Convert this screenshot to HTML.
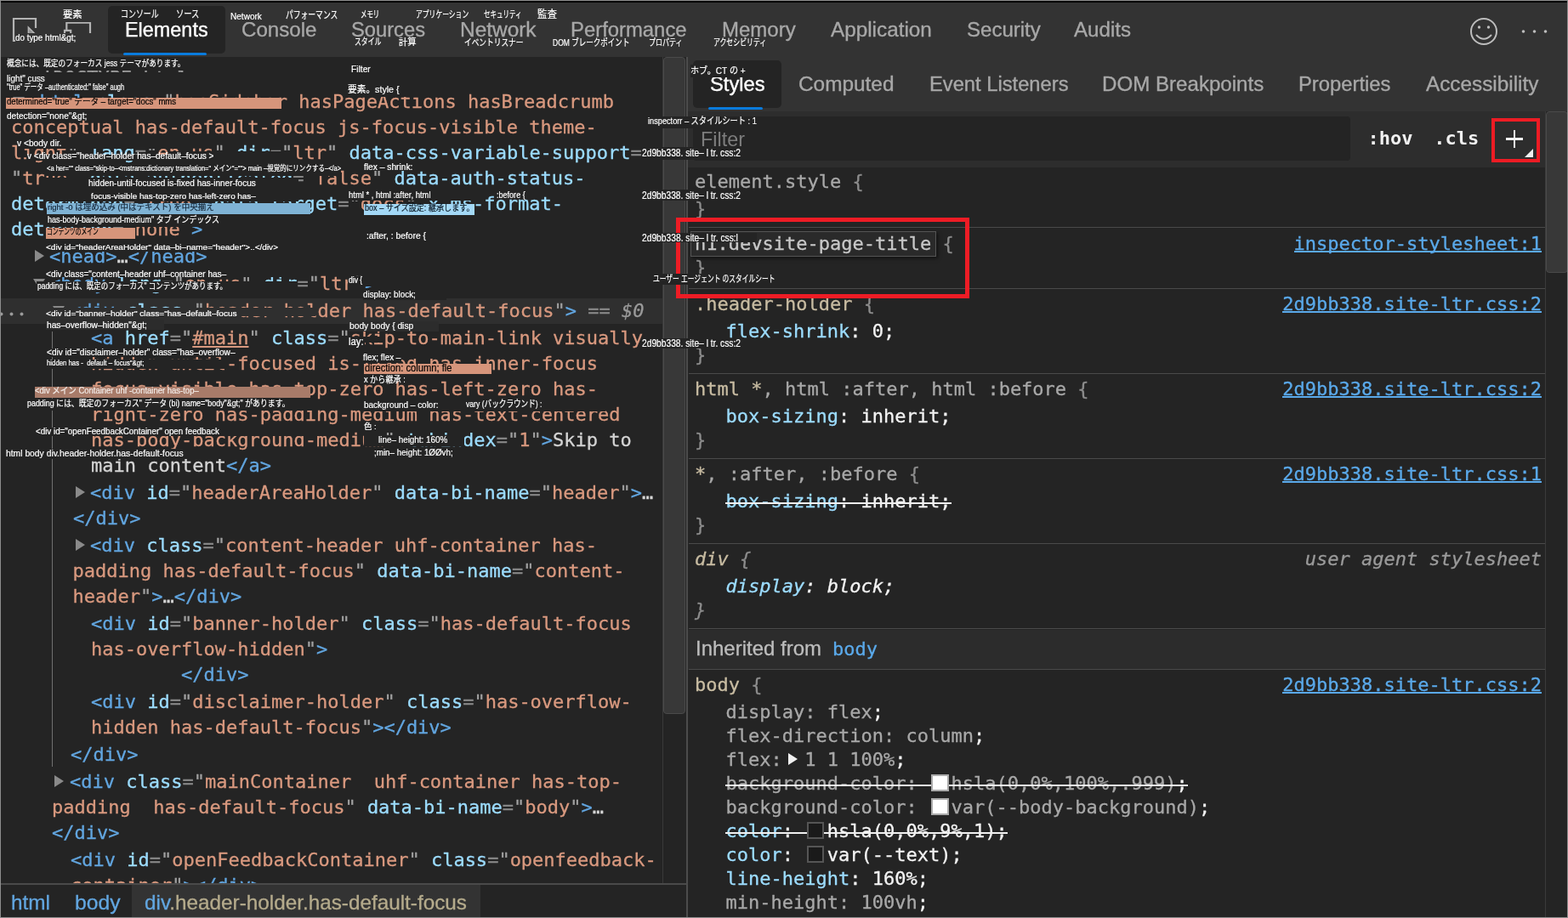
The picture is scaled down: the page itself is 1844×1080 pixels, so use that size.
<!DOCTYPE html><html lang="ja"><head><meta charset="utf-8"><title>DevTools</title><style>
html,body{margin:0;padding:0;width:1844px;height:1080px;overflow:hidden;background:#242424;}
.abs{position:absolute;}
.dl{position:absolute;font:22px 'DejaVu Sans Mono','Liberation Mono',monospace;line-height:30px;white-space:pre;color:#d4d4d4;-webkit-text-stroke:0.3px;}
.sl{position:absolute;font:22px 'DejaVu Sans Mono','Liberation Mono',monospace;line-height:28px;white-space:pre;color:#d4d4d4;-webkit-text-stroke:0.3px;}
.tb{-webkit-text-stroke:0.35px;}
</style></head><body>
<div id="root" class="abs" style="left:0;top:0;width:1844px;height:1080px;overflow:hidden;background:#242424;will-change:transform">
<div class="abs" style="left:0px;top:350.5px;width:780px;height:30.5px;background:#2f2f2f;"></div>
<svg class="abs" style="left:0;top:365px" width="32" height="10" viewBox="0 0 32 10"><circle cx="1.5" cy="4.5" r="2" fill="#9a9a9a"/><circle cx="13.5" cy="4.5" r="2" fill="#9a9a9a"/><circle cx="25.5" cy="4.5" r="2" fill="#9a9a9a"/></svg>
<div class="abs" style="left:61px;top:390px;width:1.3px;height:512px;background:#707070;"></div>
<div class="dl" style="left:36px;top:77px;"><span style="color:#9a9a9a;">&lt;!DOCTYPE html&gt;</span></div>
<svg class="abs" style="left:15px;top:113.5px" width="14" height="11" viewBox="0 0 14 11"><polygon points="0,0 14,0 7.0,11" fill="#8a8a8a"/></svg>
<div class="dl" style="left:33.3px;top:105px;"><span style="color:#62a6e0;">&lt;html</span> <span style="color:#9cdcfe;">class</span><span style="color:#8a8a8a;">=</span><span style="color:#a0a0a0;">&quot;</span><span style="color:#d9997f;">hasSidebar hasPageActions hasBreadcrumb</span></div>
<div class="dl" style="left:13px;top:135px;"><span style="color:#d9997f;">conceptual has-default-focus js-focus-visible theme-</span></div>
<div class="dl" style="left:13px;top:165px;"><span style="color:#d9997f;">light</span><span style="color:#a0a0a0;">&quot;</span> <span style="color:#9cdcfe;">lang</span><span style="color:#8a8a8a;">=</span><span style="color:#a0a0a0;">&quot;</span><span style="color:#d9997f;">en-us</span><span style="color:#a0a0a0;">&quot;</span> <span style="color:#9cdcfe;">dir</span><span style="color:#8a8a8a;">=</span><span style="color:#a0a0a0;">&quot;</span><span style="color:#d9997f;">ltr</span><span style="color:#a0a0a0;">&quot;</span> <span style="color:#9cdcfe;">data-css-variable-support</span><span style="color:#8a8a8a;">=</span></div>
<div class="dl" style="left:13px;top:195px;"><span style="color:#a0a0a0;">&quot;</span><span style="color:#d9997f;">true</span><span style="color:#a0a0a0;">&quot;</span> <span style="color:#9cdcfe;">data-authenticated</span><span style="color:#8a8a8a;">=</span><span style="color:#a0a0a0;">&quot;</span><span style="color:#d9997f;">false</span><span style="color:#a0a0a0;">&quot;</span> <span style="color:#9cdcfe;">data-auth-status-</span></div>
<div class="dl" style="left:13px;top:225px;"><span style="color:#9cdcfe;">determined</span><span style="color:#8a8a8a;">=</span><span style="color:#a0a0a0;">&quot;</span><span style="color:#d9997f;">true</span><span style="color:#a0a0a0;">&quot;</span> <span style="color:#9cdcfe;">data-target</span><span style="color:#8a8a8a;">=</span><span style="color:#a0a0a0;">&quot;</span><span style="color:#d9997f;">docs</span><span style="color:#a0a0a0;">&quot;</span> <span style="color:#9cdcfe;">x-ms-format-</span></div>
<div class="dl" style="left:13px;top:255px;"><span style="color:#9cdcfe;">detection</span><span style="color:#8a8a8a;">=</span><span style="color:#a0a0a0;">&quot;</span><span style="color:#d9997f;">none</span><span style="color:#a0a0a0;">&quot;</span><span style="color:#62a6e0;">&gt;</span></div>
<svg class="abs" style="left:41px;top:294.0px" width="11" height="14" viewBox="0 0 11 14"><polygon points="0,0 11,7.0 0,14" fill="#8a8a8a"/></svg>
<div class="dl" style="left:58px;top:287px;"><span style="color:#62a6e0;">&lt;head&gt;</span><span style="color:#d4d4d4;">…</span><span style="color:#62a6e0;">&lt;/head&gt;</span></div>
<svg class="abs" style="left:39px;top:327.5px" width="14" height="11" viewBox="0 0 14 11"><polygon points="0,0 14,0 7.0,11" fill="#8a8a8a"/></svg>
<div class="dl" style="left:58px;top:319px;"><span style="color:#62a6e0;">&lt;body</span> <span style="color:#9cdcfe;">lang</span><span style="color:#8a8a8a;">=</span><span style="color:#a0a0a0;">&quot;</span><span style="color:#d9997f;">en-us</span><span style="color:#a0a0a0;">&quot;</span> <span style="color:#9cdcfe;">dir</span><span style="color:#8a8a8a;">=</span><span style="color:#a0a0a0;">&quot;</span><span style="color:#d9997f;">ltr</span><span style="color:#a0a0a0;">&quot;</span><span style="color:#62a6e0;">&gt;</span></div>
<svg class="abs" style="left:62px;top:359.5px" width="14" height="11" viewBox="0 0 14 11"><polygon points="0,0 14,0 7.0,11" fill="#8a8a8a"/></svg>
<div class="dl" style="left:82px;top:351px;"><span style="color:#62a6e0;">&lt;div</span> <span style="color:#9cdcfe;">class</span><span style="color:#8a8a8a;">=</span><span style="color:#a0a0a0;">&quot;</span><span style="color:#d9997f;">header-holder has-default-focus</span><span style="color:#a0a0a0;">&quot;</span><span style="color:#62a6e0;">&gt;</span><span style="color:#8a8a8a;"> == </span><span style="color:#9a9a9a;font-style:italic">$0</span></div>
<div class="dl" style="left:107px;top:383px;"><span style="color:#62a6e0;">&lt;a</span> <span style="color:#9cdcfe;">href</span><span style="color:#8a8a8a;">=</span><span style="color:#a0a0a0;">&quot;</span><span style="color:#d9997f;text-decoration:underline">#main</span><span style="color:#a0a0a0;">&quot;</span> <span style="color:#9cdcfe;">class</span><span style="color:#8a8a8a;">=</span><span style="color:#a0a0a0;">&quot;</span><span style="color:#d9997f;">skip-to-main-link visually-</span></div>
<div class="dl" style="left:107px;top:413px;"><span style="color:#d9997f;">hidden-until-focused is-fixed has-inner-focus</span></div>
<div class="dl" style="left:107px;top:443px;"><span style="color:#d9997f;">focus-visible has-top-zero has-left-zero has-</span></div>
<div class="dl" style="left:107px;top:473px;"><span style="color:#d9997f;">right-zero has-padding-medium has-text-centered</span></div>
<div class="dl" style="left:107px;top:503px;"><span style="color:#d9997f;">has-body-background-medium</span><span style="color:#a0a0a0;">&quot;</span> <span style="color:#9cdcfe;">tabindex</span><span style="color:#8a8a8a;">=</span><span style="color:#a0a0a0;">&quot;</span><span style="color:#d9997f;">1</span><span style="color:#a0a0a0;">&quot;</span><span style="color:#62a6e0;">&gt;</span><span style="color:#d4d4d4;">Skip to</span></div>
<div class="dl" style="left:107px;top:533px;"><span style="color:#d4d4d4;">main content</span><span style="color:#62a6e0;">&lt;/a&gt;</span></div>
<svg class="abs" style="left:89px;top:572.0px" width="11" height="14" viewBox="0 0 11 14"><polygon points="0,0 11,7.0 0,14" fill="#8a8a8a"/></svg>
<div class="dl" style="left:106px;top:565px;"><span style="color:#62a6e0;">&lt;div</span> <span style="color:#9cdcfe;">id</span><span style="color:#8a8a8a;">=</span><span style="color:#a0a0a0;">&quot;</span><span style="color:#d9997f;">headerAreaHolder</span><span style="color:#a0a0a0;">&quot;</span> <span style="color:#9cdcfe;">data-bi-name</span><span style="color:#8a8a8a;">=</span><span style="color:#a0a0a0;">&quot;</span><span style="color:#d9997f;">header</span><span style="color:#a0a0a0;">&quot;</span><span style="color:#62a6e0;">&gt;</span><span style="color:#d4d4d4;">…</span></div>
<div class="dl" style="left:86px;top:595px;"><span style="color:#62a6e0;">&lt;/div&gt;</span></div>
<svg class="abs" style="left:89px;top:634.0px" width="11" height="14" viewBox="0 0 11 14"><polygon points="0,0 11,7.0 0,14" fill="#8a8a8a"/></svg>
<div class="dl" style="left:106px;top:627px;"><span style="color:#62a6e0;">&lt;div</span> <span style="color:#9cdcfe;">class</span><span style="color:#8a8a8a;">=</span><span style="color:#a0a0a0;">&quot;</span><span style="color:#d9997f;">content-header uhf-container has-</span></div>
<div class="dl" style="left:85.5px;top:657px;"><span style="color:#d9997f;">padding has-default-focus</span><span style="color:#a0a0a0;">&quot;</span> <span style="color:#9cdcfe;">data-bi-name</span><span style="color:#8a8a8a;">=</span><span style="color:#a0a0a0;">&quot;</span><span style="color:#d9997f;">content-</span></div>
<div class="dl" style="left:85.5px;top:687px;"><span style="color:#d9997f;">header</span><span style="color:#a0a0a0;">&quot;</span><span style="color:#62a6e0;">&gt;</span><span style="color:#d4d4d4;">…</span><span style="color:#62a6e0;">&lt;/div&gt;</span></div>
<div class="dl" style="left:107px;top:719px;"><span style="color:#62a6e0;">&lt;div</span> <span style="color:#9cdcfe;">id</span><span style="color:#8a8a8a;">=</span><span style="color:#a0a0a0;">&quot;</span><span style="color:#d9997f;">banner-holder</span><span style="color:#a0a0a0;">&quot;</span> <span style="color:#9cdcfe;">class</span><span style="color:#8a8a8a;">=</span><span style="color:#a0a0a0;">&quot;</span><span style="color:#d9997f;">has-default-focus</span></div>
<div class="dl" style="left:107px;top:749px;"><span style="color:#d9997f;">has-overflow-hidden</span><span style="color:#a0a0a0;">&quot;</span><span style="color:#62a6e0;">&gt;</span></div>
<div class="dl" style="left:213px;top:779px;"><span style="color:#62a6e0;">&lt;/div&gt;</span></div>
<div class="dl" style="left:107px;top:811px;"><span style="color:#62a6e0;">&lt;div</span> <span style="color:#9cdcfe;">id</span><span style="color:#8a8a8a;">=</span><span style="color:#a0a0a0;">&quot;</span><span style="color:#d9997f;">disclaimer-holder</span><span style="color:#a0a0a0;">&quot;</span> <span style="color:#9cdcfe;">class</span><span style="color:#8a8a8a;">=</span><span style="color:#a0a0a0;">&quot;</span><span style="color:#d9997f;">has-overflow-</span></div>
<div class="dl" style="left:107px;top:841px;"><span style="color:#d9997f;">hidden has-default-focus</span><span style="color:#a0a0a0;">&quot;</span><span style="color:#62a6e0;">&gt;&lt;/div&gt;</span></div>
<div class="dl" style="left:83px;top:873px;"><span style="color:#62a6e0;">&lt;/div&gt;</span></div>
<svg class="abs" style="left:64px;top:912.0px" width="11" height="14" viewBox="0 0 11 14"><polygon points="0,0 11,7.0 0,14" fill="#8a8a8a"/></svg>
<div class="dl" style="left:82px;top:905px;"><span style="color:#62a6e0;">&lt;div</span> <span style="color:#9cdcfe;">class</span><span style="color:#8a8a8a;">=</span><span style="color:#a0a0a0;">&quot;</span><span style="color:#d9997f;">mainContainer  uhf-container has-top-</span></div>
<div class="dl" style="left:61px;top:935px;"><span style="color:#d9997f;">padding  has-default-focus</span><span style="color:#a0a0a0;">&quot;</span> <span style="color:#9cdcfe;">data-bi-name</span><span style="color:#8a8a8a;">=</span><span style="color:#a0a0a0;">&quot;</span><span style="color:#d9997f;">body</span><span style="color:#a0a0a0;">&quot;</span><span style="color:#62a6e0;">&gt;</span><span style="color:#d4d4d4;">…</span></div>
<div class="dl" style="left:61px;top:965px;"><span style="color:#62a6e0;">&lt;/div&gt;</span></div>
<div class="dl" style="left:83px;top:997px;"><span style="color:#62a6e0;">&lt;div</span> <span style="color:#9cdcfe;">id</span><span style="color:#8a8a8a;">=</span><span style="color:#a0a0a0;">&quot;</span><span style="color:#d9997f;">openFeedbackContainer</span><span style="color:#a0a0a0;">&quot;</span> <span style="color:#9cdcfe;">class</span><span style="color:#8a8a8a;">=</span><span style="color:#a0a0a0;">&quot;</span><span style="color:#d9997f;">openfeedback-</span></div>
<div class="dl" style="left:83px;top:1027px;"><span style="color:#d9997f;">container</span><span style="color:#a0a0a0;">&quot;</span><span style="color:#62a6e0;">&gt;&lt;/div&gt;</span></div>
<div class="abs" style="left:779px;top:67px;width:1px;height:973px;background:#3a3a3a;"></div>
<div class="abs" style="left:780px;top:67px;width:26px;height:773px;background:#383838;box-sizing:border-box;border:1px solid #4a4a4a;border-radius:4px;"></div>
<div class="abs" style="left:806.5px;top:67px;width:2.5px;height:1013px;background:#4c4c4c;"></div>
<div class="abs" style="left:0px;top:1039px;width:807px;height:41px;background:#242424;"></div>
<div class="abs" style="left:0px;top:1039px;width:807px;height:1.5px;background:#4a4a4a;"></div>
<div class="abs" style="left:155px;top:1041px;width:410px;height:39px;background:#333333;"></div>
<div class="abs ft" id="b_html" style="left:13px;top:1048.2px;font:24px 'Liberation Sans','Noto Sans CJK JP',sans-serif;color:#62a6e0;white-space:pre;line-height:1;transform:scaleX(1.0145);transform-origin:0 0;line-height:28px;-webkit-text-stroke:0.3px;">html</div>
<div class="abs ft" id="b_body" style="left:88px;top:1048.2px;font:24px 'Liberation Sans','Noto Sans CJK JP',sans-serif;color:#62a6e0;white-space:pre;line-height:1;transform:scaleX(1.0279);transform-origin:0 0;line-height:28px;-webkit-text-stroke:0.3px;">body</div>
<div class="abs ft" id="b_div" style="left:169.7px;top:1048.2px;font:24px 'Liberation Sans','Noto Sans CJK JP',sans-serif;line-height:28px;-webkit-text-stroke:0.3px;white-space:pre;transform-origin:0 0;transform:scaleX(1.0121)"><span style="color:#62a6e0">div</span><span style="color:#b5ab8c">.header-holder.has-default-focus</span></div>
<div class="abs" style="left:0px;top:0px;width:1844px;height:67px;background:#333333;"></div>
<div class="abs" style="left:0px;top:1px;width:1844px;height:2px;background:#000000;"></div>
<div class="abs" style="left:127px;top:7px;width:138px;height:56px;background:#242424;border-radius:5px;"></div>
<div class="abs" style="left:145px;top:62px;width:98px;height:3px;background:#0a7bdc;border-radius:2px;"></div>
<svg class="abs" style="left:0;top:0" width="130" height="67" viewBox="0 0 130 67" fill="none" stroke="#b4b4b4" stroke-width="2.2"><path d="M42 33 V22 H16 V48 H30"/><path d="M33.4 32.2 V39.5 H40.6 Z" stroke-width="1.6" fill="#8c8c8c"/><path d="M78.3 35 V26.7 H106 V48 H86"/><path d="M76 48 V35.8 H83.2 V48 Z"/></svg>
<div class="abs ft" id="t_el" style="left:147.2px;top:23.21px;font:24.2px 'Liberation Sans','Noto Sans CJK JP',sans-serif;color:#ffffff;white-space:pre;line-height:1;transform:scaleX(0.9680);transform-origin:0 0;line-height:24.2px;-webkit-text-stroke:0.35px;">Elements</div>
<div class="abs ft" id="t_co" style="left:284.2px;top:23.21px;font:24.2px 'Liberation Sans','Noto Sans CJK JP',sans-serif;color:#a8a8a8;white-space:pre;line-height:1;transform:scaleX(0.9961);transform-origin:0 0;line-height:24.2px;-webkit-text-stroke:0.35px;">Console</div>
<div class="abs ft" id="t_so" style="left:413.0px;top:23.21px;font:24.2px 'Liberation Sans','Noto Sans CJK JP',sans-serif;color:#a8a8a8;white-space:pre;line-height:1;transform:scaleX(0.9805);transform-origin:0 0;line-height:24.2px;-webkit-text-stroke:0.35px;">Sources</div>
<div class="abs ft" id="t_ne" style="left:540.7px;top:23.21px;font:24.2px 'Liberation Sans','Noto Sans CJK JP',sans-serif;color:#a8a8a8;white-space:pre;line-height:1;transform:scaleX(1.0099);transform-origin:0 0;line-height:24.2px;-webkit-text-stroke:0.35px;">Network</div>
<div class="abs ft" id="t_pe" style="left:671.0px;top:23.21px;font:24.2px 'Liberation Sans','Noto Sans CJK JP',sans-serif;color:#a8a8a8;white-space:pre;line-height:1;transform:scaleX(0.9865);transform-origin:0 0;line-height:24.2px;-webkit-text-stroke:0.35px;">Performance</div>
<div class="abs ft" id="t_me" style="left:849.3px;top:23.21px;font:24.2px 'Liberation Sans','Noto Sans CJK JP',sans-serif;color:#a8a8a8;white-space:pre;line-height:1;transform:scaleX(0.9925);transform-origin:0 0;line-height:24.2px;-webkit-text-stroke:0.35px;">Memory</div>
<div class="abs ft" id="t_ap" style="left:977.0px;top:23.21px;font:24.2px 'Liberation Sans','Noto Sans CJK JP',sans-serif;color:#a8a8a8;white-space:pre;line-height:1;transform:scaleX(1.0040);transform-origin:0 0;line-height:24.2px;-webkit-text-stroke:0.35px;">Application</div>
<div class="abs ft" id="t_se" style="left:1136.8px;top:23.21px;font:24.2px 'Liberation Sans','Noto Sans CJK JP',sans-serif;color:#a8a8a8;white-space:pre;line-height:1;transform:scaleX(0.9934);transform-origin:0 0;line-height:24.2px;-webkit-text-stroke:0.35px;">Security</div>
<div class="abs ft" id="t_au" style="left:1263.0px;top:23.21px;font:24.2px 'Liberation Sans','Noto Sans CJK JP',sans-serif;color:#a8a8a8;white-space:pre;line-height:1;transform:scaleX(0.9965);transform-origin:0 0;line-height:24.2px;-webkit-text-stroke:0.35px;">Audits</div>
<svg class="abs" style="left:1720px;top:12px" width="120" height="50" viewBox="1720 12 120 50" fill="none" stroke="#bdbdbd" stroke-width="2"><circle cx="1745" cy="37" r="15"/><path d="M1736.5 41.5 Q1745 50 1753.5 41.5" stroke-linecap="round"/><circle cx="1739.5" cy="32" r="1.7" fill="#bdbdbd" stroke="none"/><circle cx="1750.5" cy="32" r="1.7" fill="#bdbdbd" stroke="none"/><circle cx="1791.5" cy="37" r="1.8" fill="#bdbdbd" stroke="none"/><circle cx="1804.5" cy="37" r="1.8" fill="#bdbdbd" stroke="none"/><circle cx="1817.5" cy="37" r="1.8" fill="#bdbdbd" stroke="none"/></svg>
<div class="abs" style="left:809px;top:67px;width:1035px;height:64px;background:#333333;"></div>
<div class="abs" style="left:815px;top:71px;width:104px;height:56px;background:#242424;border-radius:5px;"></div>
<div class="abs" style="left:833px;top:126px;width:64px;height:3px;background:#0a7bdc;border-radius:2px;"></div>
<div class="abs ft" id="s_st" style="left:834.7px;top:86.61px;font:24.2px 'Liberation Sans','Noto Sans CJK JP',sans-serif;color:#ffffff;white-space:pre;line-height:1;transform:scaleX(0.9806);transform-origin:0 0;line-height:24.2px;-webkit-text-stroke:0.35px;">Styles</div>
<div class="abs ft" id="s_co" style="left:938.9px;top:86.61px;font:24.2px 'Liberation Sans','Noto Sans CJK JP',sans-serif;color:#a8a8a8;white-space:pre;line-height:1;transform:scaleX(1.0080);transform-origin:0 0;line-height:24.2px;-webkit-text-stroke:0.35px;">Computed</div>
<div class="abs ft" id="s_ev" style="left:1093.0px;top:86.61px;font:24.2px 'Liberation Sans','Noto Sans CJK JP',sans-serif;color:#a8a8a8;white-space:pre;line-height:1;transform:scaleX(0.9807);transform-origin:0 0;line-height:24.2px;-webkit-text-stroke:0.35px;">Event Listeners</div>
<div class="abs ft" id="s_do" style="left:1296.3px;top:86.61px;font:24.2px 'Liberation Sans','Noto Sans CJK JP',sans-serif;color:#a8a8a8;white-space:pre;line-height:1;transform:scaleX(0.9969);transform-origin:0 0;line-height:24.2px;-webkit-text-stroke:0.35px;">DOM Breakpoints</div>
<div class="abs ft" id="s_pr" style="left:1527.3px;top:86.61px;font:24.2px 'Liberation Sans','Noto Sans CJK JP',sans-serif;color:#a8a8a8;white-space:pre;line-height:1;transform:scaleX(0.9832);transform-origin:0 0;line-height:24.2px;-webkit-text-stroke:0.35px;">Properties</div>
<div class="abs ft" id="s_ac" style="left:1676.6px;top:86.61px;font:24.2px 'Liberation Sans','Noto Sans CJK JP',sans-serif;color:#a8a8a8;white-space:pre;line-height:1;transform:scaleX(1.0051);transform-origin:0 0;line-height:24.2px;-webkit-text-stroke:0.35px;">Accessibility</div>
<div class="abs" style="left:809px;top:131px;width:1008px;height:66px;background:#2d2d2d;"></div>
<div class="abs" style="left:815px;top:137px;width:773px;height:52px;background:#242424;border-radius:4px;"></div>
<div class="abs ft" id="f_filter" style="left:823.7px;top:149.5px;font:24px 'Liberation Sans','Noto Sans CJK JP',sans-serif;color:#7d7d7d;white-space:pre;line-height:1;transform:scaleX(0.9748);transform-origin:0 0;line-height:28px;">Filter</div>
<div class="abs" style="left:1608.5px;top:149px;font:bold 22px 'DejaVu Sans Mono','Liberation Mono',monospace;line-height:28px;color:#f0f0f0;white-space:pre">:hov</div>
<div class="abs" style="left:1686.3px;top:149px;font:bold 22px 'DejaVu Sans Mono','Liberation Mono',monospace;line-height:28px;color:#f0f0f0;white-space:pre">.cls</div>
<div class="abs" style="left:1770.5px;top:162px;width:20.5px;height:2.6px;background:#f0f0f0;"></div>
<div class="abs" style="left:1779.5px;top:153px;width:2.6px;height:20.5px;background:#f0f0f0;"></div>
<svg class="abs" style="left:1793px;top:175px" width="10" height="10" viewBox="0 0 10 10"><polygon points="10,0 10,10 0,10" fill="#f0f0f0"/></svg>
<div class="abs" style="left:1754px;top:139px;width:57px;height:52px;background:transparent;box-sizing:border-box;border:4.5px solid #ed1c24;"></div>
<div class="abs" style="left:1817px;top:131px;width:1px;height:949px;background:#3a3a3a;"></div>
<div class="abs" style="left:1818px;top:131px;width:26px;height:190px;background:#383838;box-sizing:border-box;border:1px solid #4a4a4a;border-radius:4px;"></div>
<div class="sl" style="left:817px;top:200px;"><span style="color:#a8a8a8;">element.style </span><span style="color:#8c8c8c;">{</span></div>
<div class="sl" style="left:817px;top:232px;"><span style="color:#8c8c8c;">}</span></div>
<div class="abs" style="left:810px;top:266.75px;width:1007px;height:1.5px;background:#4a4a4a;"></div>
<div class="abs" style="left:811.5px;top:272px;width:289px;height:30px;background:#2a2a2a;box-sizing:border-box;border:1.5px solid #555;box-shadow:2px 2px 4px rgba(0,0,0,.5);"></div>
<div class="sl" style="left:817px;top:273px;"><span style="color:#c8c8c8;">h1.devsite-page-title</span><span style="color:#8c8c8c;"> {</span></div>
<div class="sl" style="right:31px;top:273px;color:#5aa9ea">inspector-stylesheet:1</div>
<div class="abs" style="left:1521.61px;top:295.4px;width:291.39px;height:1.8px;background:#5aa9ea;"></div>
<div class="sl" style="left:817px;top:301px;"><span style="color:#8c8c8c;">}</span></div>
<div class="abs" style="left:810px;top:338.75px;width:1007px;height:1.5px;background:#4a4a4a;"></div>
<div class="sl" style="left:817px;top:344px;"><span style="color:#c8bca2;">.header-holder</span><span style="color:#8c8c8c;"> {</span></div>
<div class="sl" style="right:31px;top:344px;color:#5aa9ea">2d9bb338.site-ltr.css:2</div>
<div class="abs" style="left:1508.37px;top:366.4px;width:304.63px;height:1.8px;background:#5aa9ea;"></div>
<div class="sl" style="left:853.6px;top:376px;"><span style="color:#9cdcfe;">flex-shrink</span><span style="color:#f2f2f2;">: 0;</span></div>
<div class="sl" style="left:817px;top:404px;"><span style="color:#8c8c8c;">}</span></div>
<div class="abs" style="left:810px;top:438.75px;width:1007px;height:1.5px;background:#4a4a4a;"></div>
<div class="sl" style="left:817px;top:444px;"><span style="color:#c8bca2;">html *</span><span style="color:#a8a8a8;">, html :after, html :before</span><span style="color:#8c8c8c;"> {</span></div>
<div class="sl" style="right:31px;top:444px;color:#5aa9ea">2d9bb338.site-ltr.css:2</div>
<div class="abs" style="left:1508.37px;top:466.4px;width:304.63px;height:1.8px;background:#5aa9ea;"></div>
<div class="sl" style="left:853.6px;top:476px;"><span style="color:#9cdcfe;">box-sizing</span><span style="color:#f2f2f2;">: inherit;</span></div>
<div class="sl" style="left:817px;top:504px;"><span style="color:#8c8c8c;">}</span></div>
<div class="abs" style="left:810px;top:538.75px;width:1007px;height:1.5px;background:#4a4a4a;"></div>
<div class="sl" style="left:817px;top:544px;"><span style="color:#c8bca2;">*</span><span style="color:#a8a8a8;">, :after, :before</span><span style="color:#8c8c8c;"> {</span></div>
<div class="sl" style="right:31px;top:544px;color:#5aa9ea">2d9bb338.site-ltr.css:1</div>
<div class="abs" style="left:1508.37px;top:566.4px;width:304.63px;height:1.8px;background:#5aa9ea;"></div>
<div class="sl" style="left:853.6px;top:576px;"><span style="color:#9cdcfe;">box-sizing</span><span style="color:#f2f2f2;">: inherit;</span></div>
<div class="abs" style="left:853px;top:590.8px;width:266px;height:2.4px;background:#f0f0f0;"></div>
<div class="sl" style="left:817px;top:604px;"><span style="color:#8c8c8c;">}</span></div>
<div class="abs" style="left:810px;top:638.75px;width:1007px;height:1.5px;background:#4a4a4a;"></div>
<div class="sl" style="left:817px;top:644px;font-style:italic;"><span style="color:#c8bca2;">div</span><span style="color:#8c8c8c;"> {</span></div>
<div class="sl" style="right:31px;top:644px;color:#9a9a9a;font-style:italic">user agent stylesheet</div>
<div class="sl" style="left:853.6px;top:676px;font-style:italic;"><span style="color:#9cdcfe;">display</span><span style="color:#f2f2f2;">: block;</span></div>
<div class="sl" style="left:817px;top:704px;font-style:italic;"><span style="color:#8c8c8c;">}</span></div>
<div class="abs" style="left:810px;top:738.75px;width:1007px;height:1.5px;background:#4a4a4a;"></div>
<div class="abs" style="left:809px;top:740.5px;width:1008px;height:47px;background:#2c2c2c;"></div>
<div class="abs ft" id="inh" style="left:818.3px;top:749px;font:24px 'Liberation Sans','Noto Sans CJK JP',sans-serif;color:#bdbdbd;white-space:pre;line-height:1;transform:scaleX(0.9995);transform-origin:0 0;line-height:28px;-webkit-text-stroke:0.3px;">Inherited from</div>
<div class="sl" style="left:979px;top:750px;color:#5aa9ea">body</div>
<div class="abs" style="left:810px;top:786.75px;width:1007px;height:1.5px;background:#4a4a4a;"></div>
<div class="sl" style="left:817px;top:792px;"><span style="color:#c8bca2;">body</span><span style="color:#8c8c8c;"> {</span></div>
<div class="sl" style="right:31px;top:792px;color:#5aa9ea">2d9bb338.site-ltr.css:2</div>
<div class="abs" style="left:1508.37px;top:814.4px;width:304.63px;height:1.8px;background:#5aa9ea;"></div>
<div class="sl" style="left:853.6px;top:824px;"><span style="color:#a8a8a8;">display: flex</span><span style="color:#f2f2f2;">;</span></div>
<div class="sl" style="left:853.6px;top:852px;"><span style="color:#a8a8a8;">flex-direction: column</span><span style="color:#f2f2f2;">;</span></div>
<div class="sl" style="left:853.6px;top:880px;"><span style="color:#a8a8a8;">flex:  1 1 100%</span><span style="color:#f2f2f2;">;</span></div>
<svg class="abs" style="left:926.5px;top:886px" width="11" height="14" viewBox="0 0 11 14"><polygon points="0,0 11,7 0,14" fill="#f0f0f0"/></svg>
<div class="sl" style="left:853.6px;top:908px;"><span style="color:#a8a8a8;">background-color:   hsla(0,0%,100%,.999)</span><span style="color:#f2f2f2;">;</span></div>
<div class="abs" style="left:853px;top:922.8px;width:544px;height:2.4px;background:#f0f0f0;"></div>
<div class="abs" style="left:1095px;top:911px;width:20.5px;height:20.3px;background:#ffffff;box-sizing:border-box;border:2px solid #ababab;"></div>
<div class="sl" style="left:853.6px;top:936px;"><span style="color:#a8a8a8;">background-color:   var(--body-background)</span><span style="color:#f2f2f2;">;</span></div>
<div class="abs" style="left:1095px;top:939px;width:20.5px;height:20.3px;background:#ffffff;box-sizing:border-box;border:2px solid #ababab;"></div>
<div class="sl" style="left:853.6px;top:964px;"><span style="color:#9cdcfe;">color</span><span style="color:#f2f2f2;">:   hsla(0,0%,9%,1);</span></div>
<div class="abs" style="left:853px;top:978.8px;width:332px;height:2.4px;background:#f0f0f0;"></div>
<div class="abs" style="left:948.7px;top:967px;width:20.5px;height:20.3px;background:#1a1a1a;box-sizing:border-box;border:2px solid #555555;"></div>
<div class="sl" style="left:853.6px;top:992px;"><span style="color:#9cdcfe;">color</span><span style="color:#f2f2f2;">:   var(--text);</span></div>
<div class="abs" style="left:948.7px;top:995px;width:20.5px;height:20.3px;background:#1a1a1a;box-sizing:border-box;border:2px solid #555555;"></div>
<div class="sl" style="left:853.6px;top:1020px;"><span style="color:#9cdcfe;">line-height</span><span style="color:#f2f2f2;">: 160%;</span></div>
<div class="sl" style="left:853.6px;top:1048px;"><span style="color:#a8a8a8;">min-height: 100vh</span><span style="color:#f2f2f2;">;</span></div>
<div class="abs" style="left:795px;top:255.5px;width:345px;height:95.5px;background:transparent;box-sizing:border-box;border:5px solid #ee1c25;"></div>
<div class="abs" style="left:17.5px;top:39px;width:90.5px;height:13px;background:#333333;"></div>
<div class="abs ft" id="o1" style="left:18px;top:38.97px;font:11.33px 'Liberation Sans','Noto Sans CJK JP',sans-serif;color:#ffffff;white-space:pre;line-height:1;transform:scaleX(0.8698);transform-origin:0 0;line-height:11.33px;-webkit-text-stroke:0.2px;">do type html&amp;gt;</div>
<div class="abs" style="left:73.5px;top:10.5px;width:49.0px;height:15.0px;background:#333333;"></div>
<div class="abs ft" id="o2" style="left:74px;top:12.09px;font:11.18px 'Liberation Sans','Noto Sans CJK JP',sans-serif;color:#ffffff;white-space:pre;line-height:1;transform:scaleX(1.0159);transform-origin:0 0;line-height:11.18px;-webkit-text-stroke:0.2px;">要素</div>
<div class="abs" style="left:142px;top:10.5px;width:44.5px;height:15.2px;background:#242424;"></div>
<div class="abs ft" id="o3" style="left:142.3px;top:11.33px;font:12.26px 'Liberation Sans','Noto Sans CJK JP',sans-serif;color:#ffffff;white-space:pre;line-height:1;transform:scaleX(0.7298);transform-origin:0 0;line-height:12.26px;-webkit-text-stroke:0.2px;">コンソール</div>
<div class="abs" style="left:206.5px;top:10.5px;width:43.5px;height:15.2px;background:#242424;"></div>
<div class="abs ft" id="o4" style="left:206.6px;top:11.28px;font:12.26px 'Liberation Sans','Noto Sans CJK JP',sans-serif;color:#ffffff;white-space:pre;line-height:1;transform:scaleX(0.7581);transform-origin:0 0;line-height:12.26px;-webkit-text-stroke:0.2px;">ソース</div>
<div class="abs" style="left:270.5px;top:10.5px;width:44.5px;height:15.2px;background:#333333;"></div>
<div class="abs ft" id="o5" style="left:271.3px;top:13.79px;font:11.07px 'Liberation Sans','Noto Sans CJK JP',sans-serif;color:#ffffff;white-space:pre;line-height:1;transform:scaleX(0.9094);transform-origin:0 0;line-height:11.07px;-webkit-text-stroke:0.2px;">Network</div>
<div class="abs" style="left:335.5px;top:10.5px;width:68.5px;height:15.2px;background:#333333;"></div>
<div class="abs ft" id="o6" style="left:336px;top:12.31px;font:12.02px 'Liberation Sans','Noto Sans CJK JP',sans-serif;color:#ffffff;white-space:pre;line-height:1;transform:scaleX(0.7308);transform-origin:0 0;line-height:12.02px;-webkit-text-stroke:0.2px;">パフォーマンス</div>
<div class="abs" style="left:424.5px;top:10.5px;width:43.5px;height:15.2px;background:#333333;"></div>
<div class="abs ft" id="o7" style="left:424.2px;top:12.09px;font:11.55px 'Liberation Sans','Noto Sans CJK JP',sans-serif;color:#ffffff;white-space:pre;line-height:1;transform:scaleX(0.6438);transform-origin:0 0;line-height:11.55px;-webkit-text-stroke:0.2px;">メモリ</div>
<div class="abs" style="left:488.5px;top:10.5px;width:63.5px;height:15.2px;background:#333333;"></div>
<div class="abs ft" id="o8" style="left:488.8px;top:12.24px;font:11.55px 'Liberation Sans','Noto Sans CJK JP',sans-serif;color:#ffffff;white-space:pre;line-height:1;transform:scaleX(0.6749);transform-origin:0 0;line-height:11.55px;-webkit-text-stroke:0.2px;">アプリケーション</div>
<div class="abs" style="left:568.5px;top:10.5px;width:45.5px;height:15.2px;background:#333333;"></div>
<div class="abs ft" id="o9" style="left:569px;top:12.19px;font:11.55px 'Liberation Sans','Noto Sans CJK JP',sans-serif;color:#ffffff;white-space:pre;line-height:1;transform:scaleX(0.6502);transform-origin:0 0;line-height:11.55px;-webkit-text-stroke:0.2px;">セキュリティ</div>
<div class="abs ft" id="o10" style="left:632px;top:11.12px;font:12.15px 'Liberation Sans','Noto Sans CJK JP',sans-serif;color:#ffffff;white-space:pre;line-height:1;transform:scaleX(0.9390);transform-origin:0 0;line-height:12.15px;-webkit-text-stroke:0.2px;">監査</div>
<div class="abs ft" id="o11" style="left:417.3px;top:44.48px;font:11.07px 'Liberation Sans','Noto Sans CJK JP',sans-serif;color:#ffffff;white-space:pre;line-height:1;transform:scaleX(0.7096);transform-origin:0 0;line-height:11.07px;-webkit-text-stroke:0.2px;">スタイル</div>
<div class="abs ft" id="o12" style="left:469.3px;top:43.54px;font:10.54px 'Liberation Sans','Noto Sans CJK JP',sans-serif;color:#ffffff;white-space:pre;line-height:1;transform:scaleX(0.9828);transform-origin:0 0;line-height:10.54px;-webkit-text-stroke:0.2px;">計算</div>
<div class="abs ft" id="o13" style="left:546.3px;top:44.62px;font:11.07px 'Liberation Sans','Noto Sans CJK JP',sans-serif;color:#ffffff;white-space:pre;line-height:1;transform:scaleX(0.7842);transform-origin:0 0;line-height:11.07px;-webkit-text-stroke:0.2px;">イベントリスナー</div>
<div class="abs ft" id="o14" style="left:649.6px;top:43.59px;font:11.67px 'Liberation Sans','Noto Sans CJK JP',sans-serif;color:#ffffff;white-space:pre;line-height:1;transform:scaleX(0.7309);transform-origin:0 0;line-height:11.67px;-webkit-text-stroke:0.2px;">DOM ブレークポイント</div>
<div class="abs ft" id="o15" style="left:763px;top:44.68px;font:11.07px 'Liberation Sans','Noto Sans CJK JP',sans-serif;color:#ffffff;white-space:pre;line-height:1;transform:scaleX(0.7245);transform-origin:0 0;line-height:11.07px;-webkit-text-stroke:0.2px;">プロパティ</div>
<div class="abs ft" id="o16" style="left:838.6px;top:44.68px;font:11.07px 'Liberation Sans','Noto Sans CJK JP',sans-serif;color:#ffffff;white-space:pre;line-height:1;transform:scaleX(0.7125);transform-origin:0 0;line-height:11.07px;-webkit-text-stroke:0.2px;">アクセシビリティ</div>
<div class="abs" style="left:7px;top:67.5px;width:344px;height:15.6px;background:#242424;"></div>
<div class="abs ft" id="o17" style="left:8px;top:69.35px;font:10.54px 'Liberation Sans','Noto Sans CJK JP',sans-serif;color:#ffffff;white-space:pre;line-height:1;transform:scaleX(0.8209);transform-origin:0 0;line-height:10.54px;-webkit-text-stroke:0.2px;">概念には、既定のフォーカス jess テーマがあります。</div>
<div class="abs" style="left:7px;top:85.3px;width:371px;height:12.7px;background:#242424;"></div>
<div class="abs ft" id="o18" style="left:8px;top:86.85px;font:11.47px 'Liberation Sans','Noto Sans CJK JP',sans-serif;color:#ffffff;white-space:pre;line-height:1;transform:scaleX(0.8634);transform-origin:0 0;line-height:11.47px;-webkit-text-stroke:0.2px;">light&quot; cuss</div>
<div class="abs" style="left:7px;top:98px;width:337px;height:12px;background:#242424;"></div>
<div class="abs ft" id="o19" style="left:8px;top:97.33px;font:10.67px 'Liberation Sans','Noto Sans CJK JP',sans-serif;color:#ffffff;white-space:pre;line-height:1;transform:scaleX(0.7036);transform-origin:0 0;line-height:10.67px;-webkit-text-stroke:0.2px;">&quot;true&quot; データ –authenticated:&quot; false&quot; augh</div>
<div class="abs" style="left:6.8px;top:115px;width:324.4px;height:13.3px;background:#d6957b;"></div>
<div class="abs ft" id="o20" style="left:7.5px;top:114.7px;font:10.0px 'Liberation Sans','Noto Sans CJK JP',sans-serif;color:#000000;white-space:pre;line-height:1;transform:scaleX(0.9564);transform-origin:0 0;line-height:10px;-webkit-text-stroke:0.2px;">determined=&quot;true&quot; データ – target=&quot;docs&quot; mms</div>
<div class="abs" style="left:7px;top:131.5px;width:112px;height:8.3px;background:#242424;"></div>
<div class="abs ft" id="o21" style="left:7.5px;top:131.13px;font:10.67px 'Liberation Sans','Noto Sans CJK JP',sans-serif;color:#ffffff;white-space:pre;line-height:1;transform:scaleX(0.9458);transform-origin:0 0;line-height:10.67px;-webkit-text-stroke:0.2px;">detection=&quot;none&quot;&amp;gt;</div>
<div class="abs" style="left:20px;top:164px;width:201px;height:11.2px;background:#242424;"></div>
<div class="abs ft" id="o22" style="left:20px;top:164.3px;font:10.0px 'Liberation Sans','Noto Sans CJK JP',sans-serif;color:#ffffff;white-space:pre;line-height:1;transform:scaleX(1.0190);transform-origin:0 0;line-height:10px;-webkit-text-stroke:0.2px;">v &lt;body dir.</div>
<div class="abs" style="left:31px;top:181.6px;width:221px;height:7.4px;background:#242424;"></div>
<div class="abs" style="left:200px;top:178px;width:145.5px;height:15px;background:#242424;"></div>
<div class="abs ft" id="o23" style="left:31.9px;top:179.3px;font:10.0px 'Liberation Sans','Noto Sans CJK JP',sans-serif;color:#ffffff;white-space:pre;line-height:1;transform:scaleX(1.0045);transform-origin:0 0;line-height:10px;-webkit-text-stroke:0.2px;">v &lt;div class=&quot;header–holder has–default–focus &gt;</div>
<div class="abs" style="left:53.5px;top:193px;width:347.5px;height:13.5px;background:#242424;"></div>
<div class="abs ft" id="o24" style="left:54.7px;top:193.78px;font:9.2px 'Liberation Sans','Noto Sans CJK JP',sans-serif;color:#ffffff;white-space:pre;line-height:1;transform:scaleX(0.8186);transform-origin:0 0;line-height:9.2px;-webkit-text-stroke:0.2px;">&lt;a her=&quot;&quot; class=&quot;skip-to–&lt;mstrans:dictionary translation=&quot; メイン&quot;=&quot;&quot;&gt; main –視覚的にリンクする–&lt;/a&gt;</div>
<div class="abs" style="left:53.5px;top:209.2px;width:297.5px;height:13.8px;background:#242424;"></div>
<div class="abs" style="left:53.5px;top:214px;width:297.5px;height:12px;background:#242424;"></div>
<div class="abs ft" id="o25" style="left:104.2px;top:210.05px;font:10.53px 'Liberation Sans','Noto Sans CJK JP',sans-serif;color:#ffffff;white-space:pre;line-height:1;transform:scaleX(0.9537);transform-origin:0 0;line-height:10.53px;-webkit-text-stroke:0.2px;">hidden-until-focused is-fixed has-inner-focus</div>
<div class="abs" style="left:53.5px;top:226px;width:297.5px;height:11.3px;background:#242424;"></div>
<div class="abs ft" id="o26" style="left:107.3px;top:225.93px;font:9.73px 'Liberation Sans','Noto Sans CJK JP',sans-serif;color:#ffffff;white-space:pre;line-height:1;transform:scaleX(1.0129);transform-origin:0 0;line-height:9.73px;-webkit-text-stroke:0.2px;">focus-visible has-top-zero has-left-zero has–</div>
<div class="abs" style="left:54.7px;top:239.2px;width:310.1px;height:13.2px;background:#7fb3d5;"></div>
<div class="abs ft" id="o27" style="left:55.8px;top:239.4px;font:9.89px 'Liberation Sans','Noto Sans CJK JP',sans-serif;color:#16283a;white-space:pre;line-height:1;transform:scaleX(0.9629);transform-origin:0 0;line-height:9.89px;-webkit-text-stroke:0.2px;">right -0 は埋め込み (中はテキスト) を中央揃え</div>
<div class="abs" style="left:53.5px;top:254px;width:317.5px;height:13.4px;background:#242424;"></div>
<div class="abs ft" id="o28" style="left:55.8px;top:253.7px;font:10.0px 'Liberation Sans','Noto Sans CJK JP',sans-serif;color:#ffffff;white-space:pre;line-height:1;transform:scaleX(0.8996);transform-origin:0 0;line-height:10px;-webkit-text-stroke:0.2px;">has-body-background-medium&quot; タブ インデックス</div>
<div class="abs" style="left:54px;top:268.4px;width:105.2px;height:12.4px;background:#d6957b;"></div>
<div class="abs ft" id="o29" style="left:54.7px;top:268.49px;font:10.48px 'Liberation Sans','Noto Sans CJK JP',sans-serif;color:#000000;white-space:pre;line-height:1;transform:scaleX(0.6453);transform-origin:0 0;line-height:10.48px;-webkit-text-stroke:0.2px;">コンテンツのメイン</div>
<div class="abs" style="left:44px;top:287px;width:340px;height:9.2px;background:#242424;"></div>
<div class="abs ft" id="o30" style="left:53.7px;top:286.13px;font:9.73px 'Liberation Sans','Noto Sans CJK JP',sans-serif;color:#ffffff;white-space:pre;line-height:1;transform:scaleX(1.0299);transform-origin:0 0;line-height:9.73px;-webkit-text-stroke:0.2px;">&lt;div id=&quot;headerAreaHolder&quot; data–bi–name=&quot;header&quot;&gt;..&lt;/div&gt;</div>
<div class="abs" style="left:44.5px;top:318px;width:305.5px;height:8.4px;background:#242424;"></div>
<div class="abs ft" id="o31" style="left:54px;top:317.7px;font:10.0px 'Liberation Sans','Noto Sans CJK JP',sans-serif;color:#ffffff;white-space:pre;line-height:1;transform:scaleX(1.0061);transform-origin:0 0;line-height:10px;-webkit-text-stroke:0.2px;">&lt;div class=&quot;content–header uhf–container has–</div>
<div class="abs" style="left:42.5px;top:331px;width:307.5px;height:13px;background:#242424;"></div>
<div class="abs ft" id="o32" style="left:44.3px;top:331.63px;font:10.11px 'Liberation Sans','Noto Sans CJK JP',sans-serif;color:#ffffff;white-space:pre;line-height:1;transform:scaleX(0.8378);transform-origin:0 0;line-height:10.11px;-webkit-text-stroke:0.2px;">padding には、既定のフォーカス&quot; コンテンツがあります。</div>
<div class="abs" style="left:53.5px;top:362px;width:317.5px;height:9.5px;background:#2f2f2f;"></div>
<div class="abs" style="left:54px;top:362px;width:225px;height:14px;background:#2f2f2f;"></div>
<div class="abs ft" id="o33" style="left:54px;top:363.73px;font:9.73px 'Liberation Sans','Noto Sans CJK JP',sans-serif;color:#ffffff;white-space:pre;line-height:1;transform:scaleX(1.0375);transform-origin:0 0;line-height:9.73px;-webkit-text-stroke:0.2px;">&lt;div id=&quot;banner–holder&quot; class=&quot;has–default–focus</div>
<div class="abs" style="left:54px;top:376px;width:139px;height:11.6px;background:#2c2c2c;"></div>
<div class="abs ft" id="o34" style="left:55px;top:377.05px;font:10.53px 'Liberation Sans','Noto Sans CJK JP',sans-serif;color:#ffffff;white-space:pre;line-height:1;transform:scaleX(0.9678);transform-origin:0 0;line-height:10.53px;-webkit-text-stroke:0.2px;">has–overflow–hidden&quot;&amp;gt;</div>
<div class="abs" style="left:53.5px;top:410px;width:223.5px;height:9.6px;background:#242424;"></div>
<div class="abs ft" id="o35" style="left:54.6px;top:409.9px;font:10.0px 'Liberation Sans','Noto Sans CJK JP',sans-serif;color:#ffffff;white-space:pre;line-height:1;transform:scaleX(1.0071);transform-origin:0 0;line-height:10px;-webkit-text-stroke:0.2px;">&lt;div id=&quot;disclaimer–holder&quot; class=&quot;has–overflow–</div>
<div class="abs" style="left:53.5px;top:422.7px;width:211.5px;height:11.3px;background:#242424;"></div>
<div class="abs ft" id="o36" style="left:55px;top:421.93px;font:9.73px 'Liberation Sans','Noto Sans CJK JP',sans-serif;color:#ffffff;white-space:pre;line-height:1;transform:scaleX(0.8008);transform-origin:0 0;line-height:9.73px;-webkit-text-stroke:0.2px;">hidden has -  default – focus&quot;&amp;gt;</div>
<div class="abs" style="left:41.2px;top:455.2px;width:323.5px;height:12.8px;background:#a87b69;"></div>
<div class="abs ft" id="o37" style="left:41.2px;top:454.25px;font:10.53px 'Liberation Sans','Noto Sans CJK JP',sans-serif;color:#f3ebe7;white-space:pre;line-height:1;transform:scaleX(0.9020);transform-origin:0 0;line-height:10.53px;-webkit-text-stroke:0.2px;">&lt;div メイン Container uhf -container has-top–</div>
<div class="abs" style="left:30.5px;top:469px;width:341.5px;height:13.5px;background:#242424;"></div>
<div class="abs ft" id="o38" style="left:32.4px;top:469.99px;font:10.22px 'Liberation Sans','Noto Sans CJK JP',sans-serif;color:#ffffff;white-space:pre;line-height:1;transform:scaleX(0.8691);transform-origin:0 0;line-height:10.22px;-webkit-text-stroke:0.2px;">padding には、既定のフォーカス&quot; データ (bi) name=&quot;body&quot;&amp;gt;&quot; があります。</div>
<div class="abs" style="left:41.5px;top:503px;width:343.5px;height:10px;background:#242424;"></div>
<div class="abs ft" id="o39" style="left:42.2px;top:502.99px;font:10.13px 'Liberation Sans','Noto Sans CJK JP',sans-serif;color:#ffffff;white-space:pre;line-height:1;transform:scaleX(0.9686);transform-origin:0 0;line-height:10.13px;-webkit-text-stroke:0.2px;">&lt;div id=&quot;openFeedbackContainer&quot; open feedback</div>
<div class="abs" style="left:6.5px;top:528px;width:268.5px;height:12px;background:#242424;"></div>
<div class="abs ft" id="o40" style="left:7.2px;top:527.77px;font:11.33px 'Liberation Sans','Noto Sans CJK JP',sans-serif;color:#ffffff;white-space:pre;line-height:1;transform:scaleX(0.9117);transform-origin:0 0;line-height:11.33px;-webkit-text-stroke:0.2px;">html body div.header-holder.has-default-focus</div>
<div class="abs ft" id="o41" style="left:413px;top:75.77px;font:11.33px 'Liberation Sans','Noto Sans CJK JP',sans-serif;color:#ffffff;white-space:pre;line-height:1;transform:scaleX(0.9052);transform-origin:0 0;line-height:11.33px;-webkit-text-stroke:0.2px;">Filter</div>
<div class="abs" style="left:408.5px;top:99px;width:99.0px;height:14.6px;background:#242424;"></div>
<div class="abs ft" id="o42" style="left:409px;top:99.98px;font:11.29px 'Liberation Sans','Noto Sans CJK JP',sans-serif;color:#ffffff;white-space:pre;line-height:1;transform:scaleX(0.9476);transform-origin:0 0;line-height:11.29px;-webkit-text-stroke:0.2px;">要素。style {</div>
<div class="abs" style="left:427px;top:192px;width:59px;height:9px;background:#242424;"></div>
<div class="abs ft" id="o43" style="left:428px;top:191.7px;font:10.0px 'Liberation Sans','Noto Sans CJK JP',sans-serif;color:#ffffff;white-space:pre;line-height:1;transform:scaleX(1.0224);transform-origin:0 0;line-height:10px;-webkit-text-stroke:0.2px;">flex – shrink:</div>
<div class="abs" style="left:408.5px;top:225px;width:159.5px;height:11px;background:#242424;"></div>
<div class="abs ft" id="o44" style="left:410px;top:223.85px;font:10.53px 'Liberation Sans','Noto Sans CJK JP',sans-serif;color:#ffffff;white-space:pre;line-height:1;transform:scaleX(0.8983);transform-origin:0 0;line-height:10.53px;-webkit-text-stroke:0.2px;">html * , html :after, html</div>
<div class="abs" style="left:583px;top:225px;width:35px;height:9px;background:#242424;"></div>
<div class="abs ft" id="o45" style="left:583.5px;top:223.85px;font:10.53px 'Liberation Sans','Noto Sans CJK JP',sans-serif;color:#ffffff;white-space:pre;line-height:1;transform:scaleX(0.8603);transform-origin:0 0;line-height:10.53px;-webkit-text-stroke:0.2px;">:before {</div>
<div class="abs" style="left:428px;top:240.2px;width:129.8px;height:12.7px;background:#a3d8f6;"></div>
<div class="abs ft" id="o46" style="left:428.5px;top:240.16px;font:10.0px 'Liberation Sans','Noto Sans CJK JP',sans-serif;color:#0c1a26;white-space:pre;line-height:1;transform:scaleX(0.9081);transform-origin:0 0;line-height:10px;-webkit-text-stroke:0.2px;">box – サイズ設定: 継承します。</div>
<div class="abs ft" id="o47" style="left:431.2px;top:271.85px;font:10.53px 'Liberation Sans','Noto Sans CJK JP',sans-serif;color:#ffffff;white-space:pre;line-height:1;transform:scaleX(0.9814);transform-origin:0 0;line-height:10.53px;-webkit-text-stroke:0.2px;">:after, : before {</div>
<div class="abs" style="left:408.5px;top:325px;width:33.5px;height:12.2px;background:#242424;"></div>
<div class="abs ft" id="o48" style="left:409.8px;top:325.47px;font:10.27px 'Liberation Sans','Noto Sans CJK JP',sans-serif;color:#ffffff;white-space:pre;line-height:1;transform:scaleX(0.8348);transform-origin:0 0;line-height:10.27px;-webkit-text-stroke:0.2px;">div {</div>
<div class="abs" style="left:427px;top:338.7px;width:98px;height:14.3px;background:#242424;"></div>
<div class="abs ft" id="o49" style="left:427.3px;top:341.08px;font:11.2px 'Liberation Sans','Noto Sans CJK JP',sans-serif;color:#ffffff;white-space:pre;line-height:1;transform:scaleX(0.8793);transform-origin:0 0;line-height:11.2px;-webkit-text-stroke:0.2px;">display: block;</div>
<div class="abs" style="left:410px;top:378px;width:106.3px;height:11.7px;background:#2c2c2c;"></div>
<div class="abs ft" id="o50" style="left:411px;top:377.68px;font:11.2px 'Liberation Sans','Noto Sans CJK JP',sans-serif;color:#ffffff;white-space:pre;line-height:1;transform:scaleX(0.9159);transform-origin:0 0;line-height:11.2px;-webkit-text-stroke:0.2px;">body body { disp</div>
<div class="abs" style="left:408.5px;top:396px;width:39.5px;height:7px;background:#242424;"></div>
<div class="abs" style="left:409.5px;top:396px;width:19.0px;height:13.5px;background:#242424;"></div>
<div class="abs ft" id="o51" style="left:410px;top:396.91px;font:11.87px 'Liberation Sans','Noto Sans CJK JP',sans-serif;color:#ffffff;white-space:pre;line-height:1;transform:scaleX(0.9584);transform-origin:0 0;line-height:11.87px;-webkit-text-stroke:0.2px;">lay:</div>
<div class="abs" style="left:427px;top:415px;width:92.5px;height:7px;background:#242424;"></div>
<div class="abs" style="left:427px;top:415px;width:45px;height:12px;background:#242424;"></div>
<div class="abs ft" id="o52" style="left:427.3px;top:414.71px;font:10.93px 'Liberation Sans','Noto Sans CJK JP',sans-serif;color:#ffffff;white-space:pre;line-height:1;transform:scaleX(0.9009);transform-origin:0 0;line-height:10.93px;-webkit-text-stroke:0.2px;">flex; flex –</div>
<div class="abs" style="left:428px;top:428.1px;width:150.1px;height:11.7px;background:#d6957b;"></div>
<div class="abs ft" id="o53" style="left:428.5px;top:428.31px;font:11.87px 'Liberation Sans','Noto Sans CJK JP',sans-serif;color:#000000;white-space:pre;line-height:1;transform:scaleX(0.9424);transform-origin:0 0;line-height:11.87px;-webkit-text-stroke:0.2px;">direction: column; fle</div>
<div class="abs" style="left:427px;top:440px;width:50px;height:8px;background:#242424;"></div>
<div class="abs ft" id="o54" style="left:427.7px;top:441.69px;font:10.0px 'Liberation Sans','Noto Sans CJK JP',sans-serif;color:#ffffff;white-space:pre;line-height:1;transform:scaleX(0.9148);transform-origin:0 0;line-height:10px;-webkit-text-stroke:0.2px;">x から継承 :</div>
<div class="abs" style="left:427px;top:470.5px;width:284.5px;height:13.0px;background:#242424;"></div>
<div class="abs ft" id="o55" style="left:428px;top:471.31px;font:10.93px 'Liberation Sans','Noto Sans CJK JP',sans-serif;color:#ffffff;white-space:pre;line-height:1;transform:scaleX(0.9121);transform-origin:0 0;line-height:10.93px;-webkit-text-stroke:0.2px;">background – color:</div>
<div class="abs ft" id="o56" style="left:548px;top:470.46px;font:11.31px 'Liberation Sans','Noto Sans CJK JP',sans-serif;color:#ffffff;white-space:pre;line-height:1;transform:scaleX(0.7625);transform-origin:0 0;line-height:11.31px;-webkit-text-stroke:0.2px;">vary (バックラウンド) :</div>
<div class="abs" style="left:427px;top:497px;width:138.5px;height:11.5px;background:#242424;"></div>
<div class="abs ft" id="o57" style="left:428px;top:497.42px;font:9.46px 'Liberation Sans','Noto Sans CJK JP',sans-serif;color:#ffffff;white-space:pre;line-height:1;transform:scaleX(0.9919);transform-origin:0 0;line-height:9.46px;-webkit-text-stroke:0.2px;">色 :</div>
<div class="abs" style="left:428.3px;top:512px;width:117.7px;height:12.5px;background:#242424;"></div>
<div class="abs ft" id="o58" style="left:445.2px;top:512.28px;font:11.2px 'Liberation Sans','Noto Sans CJK JP',sans-serif;color:#ffffff;white-space:pre;line-height:1;transform:scaleX(0.8842);transform-origin:0 0;line-height:11.2px;-webkit-text-stroke:0.2px;">line– height: 160%</div>
<div class="abs" style="left:427px;top:526px;width:119px;height:12px;background:#242424;"></div>
<div class="abs ft" id="o59" style="left:439.9px;top:526.79px;font:11.07px 'Liberation Sans','Noto Sans CJK JP',sans-serif;color:#ffffff;white-space:pre;line-height:1;transform:scaleX(0.8867);transform-origin:0 0;line-height:11.07px;-webkit-text-stroke:0.2px;">;min– height: 1ØØvh;</div>
<div class="abs" style="left:812px;top:75.5px;width:88px;height:15.4px;background:#242424;"></div>
<div class="abs ft" id="o60" style="left:812px;top:77.91px;font:11.55px 'Liberation Sans','Noto Sans CJK JP',sans-serif;color:#ffffff;white-space:pre;line-height:1;transform:scaleX(0.8708);transform-origin:0 0;line-height:11.55px;-webkit-text-stroke:0.2px;">ホブ。CT の +</div>
<div class="abs" style="left:753.7px;top:136.5px;width:137.3px;height:14.3px;background:#242424;"></div>
<div class="abs ft" id="o61" style="left:761.9px;top:136.77px;font:11.33px 'Liberation Sans','Noto Sans CJK JP',sans-serif;color:#ffffff;white-space:pre;line-height:1;transform:scaleX(0.8121);transform-origin:0 0;line-height:11.33px;-webkit-text-stroke:0.2px;">inspectorr – スタイルシート : 1</div>
<div class="abs" style="left:754px;top:173px;width:117.5px;height:14.8px;background:#242424;"></div>
<div class="abs ft" id="o62" style="left:754.6px;top:174.91px;font:11.87px 'Liberation Sans','Noto Sans CJK JP',sans-serif;color:#ffffff;white-space:pre;line-height:1;transform:scaleX(0.8625);transform-origin:0 0;line-height:11.87px;-webkit-text-stroke:0.2px;">2d9bb338. site– l tr. css:2</div>
<div class="abs" style="left:754px;top:223px;width:117.5px;height:13px;background:#242424;"></div>
<div class="abs ft" id="o63" style="left:754.6px;top:224.91px;font:11.87px 'Liberation Sans','Noto Sans CJK JP',sans-serif;color:#ffffff;white-space:pre;line-height:1;transform:scaleX(0.8625);transform-origin:0 0;line-height:11.87px;-webkit-text-stroke:0.2px;">2d9bb338. site– l tr. css:2</div>
<div class="abs" style="left:754px;top:274.3px;width:136px;height:11.2px;background:#242424;"></div>
<div class="abs ft" id="o64" style="left:754.6px;top:274.91px;font:11.87px 'Liberation Sans','Noto Sans CJK JP',sans-serif;color:#ffffff;white-space:pre;line-height:1;transform:scaleX(0.8649);transform-origin:0 0;line-height:11.87px;-webkit-text-stroke:0.2px;">2d9bb338. site– l tr. css:l</div>
<div class="abs" style="left:767px;top:322px;width:145.5px;height:12.5px;background:#242424;"></div>
<div class="abs ft" id="o65" style="left:768px;top:322.84px;font:11.55px 'Liberation Sans','Noto Sans CJK JP',sans-serif;color:#ffffff;white-space:pre;line-height:1;transform:scaleX(0.6716);transform-origin:0 0;line-height:11.55px;-webkit-text-stroke:0.2px;">ユーザー エージェント のスタイルシート</div>
<div class="abs" style="left:754px;top:397.5px;width:117.5px;height:12.8px;background:#242424;"></div>
<div class="abs ft" id="o66" style="left:754.6px;top:397.69px;font:12.13px 'Liberation Sans','Noto Sans CJK JP',sans-serif;color:#ffffff;white-space:pre;line-height:1;transform:scaleX(0.8435);transform-origin:0 0;line-height:12.13px;-webkit-text-stroke:0.2px;">2d9bb338. site– l tr. css:2</div>
<div class="abs" style="left:0px;top:0px;width:1844px;height:1px;background:#8e8e8e;"></div>
<div class="abs" style="left:0px;top:0px;width:1px;height:1080px;background:#8e8e8e;"></div>
<div class="abs" style="left:1843px;top:0px;width:1px;height:1080px;background:#8e8e8e;"></div>
<div class="abs" style="left:0px;top:1079px;width:1844px;height:1px;background:#8e8e8e;"></div>
</div>
</body></html>
